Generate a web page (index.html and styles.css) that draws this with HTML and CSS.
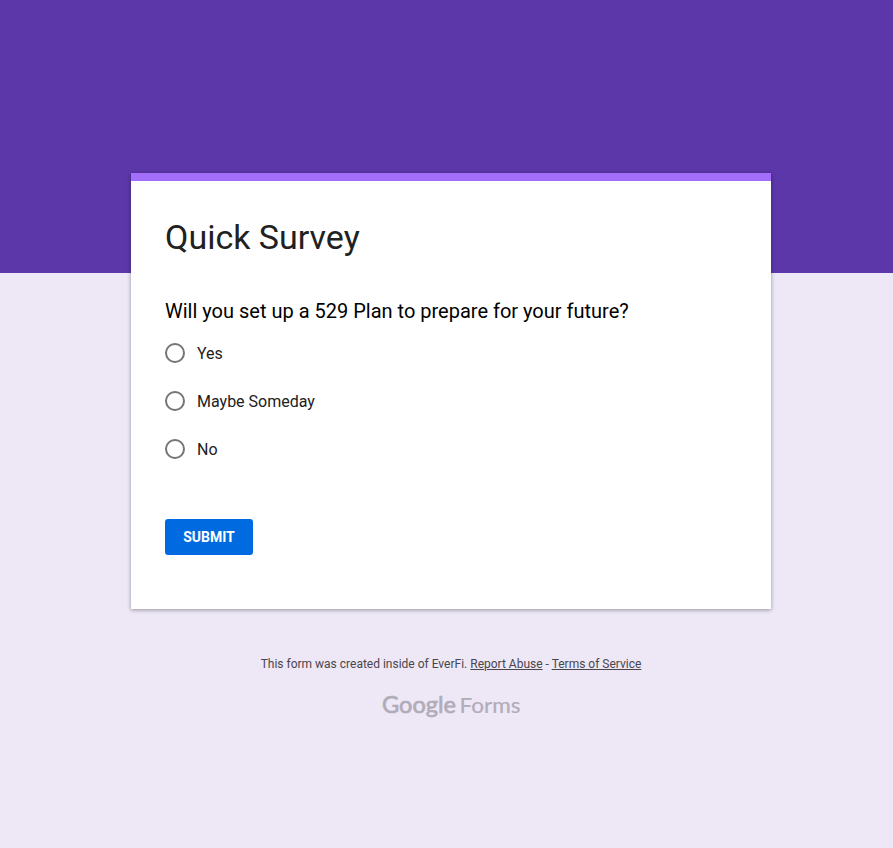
FILE: index.html
```html
<!DOCTYPE html>
<html lang="en">
<head>
<meta charset="utf-8">
<title>Quick Survey</title>
<link rel="stylesheet" href="styles.css">
</head>
<body>
<main class="page">
<form class="card">
<h1 class="title">Quick Survey</h1>
<h2 class="question">Will you set up a 529 Plan to prepare for your future?</h2>
<div class="options">
<label class="option"><input class="radio" type="radio" name="plan"><span>Yes</span></label>
<label class="option"><input class="radio" type="radio" name="plan"><span>Maybe Someday</span></label>
<label class="option"><input class="radio" type="radio" name="plan"><span>No</span></label>
</div>
<button class="submit" type="button">SUBMIT</button>
</form>
<footer class="footer">
<p class="legal">This form was created inside of EverFi. <a href="#">Report Abuse</a> - <a href="#">Terms of Service</a></p>
<svg class="brand" width="140" height="30" viewBox="0 0 140 30" role="img" aria-label="Google Forms">
<text class="google" x="1" y="23" textLength="74" lengthAdjust="spacingAndGlyphs">Google</text>
<text class="forms" x="78.5" y="23" textLength="61" lengthAdjust="spacingAndGlyphs">Forms</text>
</svg>
</footer>
</main>
</body>
</html>
```

FILE: styles.css
```css
* { box-sizing: border-box; }
body {
  margin: 0;
  min-height: 848px;
  background: linear-gradient(#5c37a9 273px, #ede7f6 273px);
  font-family: Roboto, sans-serif;
  color: #212121;
}
.page { width: 640px; margin-left: 131px; padding-top: 173px; }
.card {
  height: 436px;
  padding: 33px 34px 0;
  background: #fff;
  border-top: 8px solid #a36ffa;
  box-shadow: 0 1px 4px rgba(0, 0, 0, .37);
}
.title { margin: 0; font-size: 34px; line-height: 46px; font-weight: 400; }
.question { margin: 39px 0 0; font-size: 20px; line-height: 24px; font-weight: 400; color: #000; }
.options { display: grid; gap: 24px; margin-top: 18px; }
.option { display: flex; align-items: center; gap: 12px; height: 24px; font-size: 16px; }
.radio { appearance: none; width: 20px; height: 20px; margin: 0; border: 2px solid #757575; border-radius: 50%; background: #fff; }
.submit {
  display: block;
  width: 88px;
  height: 36px;
  margin-top: 58px;
  padding: 0;
  border: 0;
  border-radius: 3px;
  background: #006be0;
  color: #fff;
  font: 700 14px Roboto, sans-serif;
}
.footer { padding-top: 47px; text-align: center; }
.legal { margin: 0; font-size: 12px; line-height: 16px; color: #4a464d; }
.legal a { color: inherit; }
.brand { display: block; margin: 18px auto 0; fill: #b1acb8; font-family: Lato, sans-serif; overflow: visible; }
.google { font-size: 24px; stroke: #b1acb8; stroke-width: .7px; }
.forms { font-size: 21.5px; stroke: #b1acb8; stroke-width: .2px; }
```
